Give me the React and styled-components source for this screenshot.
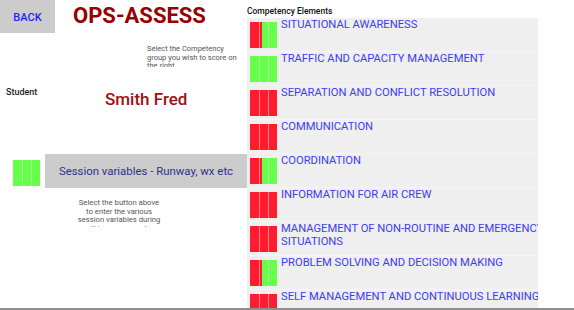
import React from "react";
import styled, { createGlobalStyle } from "styled-components";

const competencies = [
  { name: "SITUATIONAL AWARENESS", fills: [1, 0.35, 0] },
  { name: "TRAFFIC AND CAPACITY MANAGEMENT", fills: [0, 0, 0] },
  { name: "SEPARATION AND CONFLICT RESOLUTION", fills: [1, 1, 1] },
  { name: "COMMUNICATION", fills: [1, 1, 1] },
  { name: "COORDINATION", fills: [1, 0.35, 0] },
  { name: "INFORMATION FOR AIR CREW", fills: [1, 1, 1] },
  { name: "MANAGEMENT OF NON-ROUTINE AND EMERGENCY SITUATIONS", fills: [1, 1, 1] },
  { name: "PROBLEM SOLVING AND DECISION MAKING", fills: [1, 0.35, 0] },
  { name: "SELF MANAGEMENT AND CONTINUOUS LEARNING", fills: [1, 1, 1] },
];

const Bars = ({ fills }) => (
  <BarGroup>
    {fills.map((f, i) => (
      <Segment key={i} $fill={f} $first={i === 0} />
    ))}
  </BarGroup>
);

const App = () => {
  return (
    <>
      <GlobalStyle />
      <Page>
        <Main>
          <LeftColumn>
            <Header>
              <BackButton>BACK</BackButton>
              <Title>OPS-ASSESS</Title>
            </Header>
            <Hint>Select the Competency group you wish to score on the right</Hint>
            <StudentRow>
              <StudentLabel>Student</StudentLabel>
              <StudentName>Smith Fred</StudentName>
            </StudentRow>
            <SessionRow>
              <Bars fills={[0, 0, 0]} />
              <SessionButton>Session variables - Runway, wx etc</SessionButton>
            </SessionRow>
            <SessionNote>
              Select the button above
              <br />
              to enter the various
              <br />
              session variables during
              <br />
              this assessment
            </SessionNote>
          </LeftColumn>
          <RightColumn>
            <ListLabel>Competency Elements</ListLabel>
            <List>
              {competencies.map((c) => (
                <Row key={c.name}>
                  <Bars fills={c.fills} />
                  <RowText>{c.name}</RowText>
                </Row>
              ))}
            </List>
          </RightColumn>
        </Main>
        <BottomRule />
      </Page>
    </>
  );
};

export default App;

const GlobalStyle = createGlobalStyle`
  html, body {
    margin: 0;
    padding: 0;
    background: #ffffff;
  }
  body {
    width: 574px;
    height: 310px;
    overflow: hidden;
    font-family: Roboto, "Liberation Sans", sans-serif;
  }
`;

const Page = styled.div`
  width: 574px;
  height: 310px;
  display: flex;
  flex-direction: column;
`;

const Main = styled.div`
  display: flex;
  height: 308px;
  overflow: hidden;
`;

const LeftColumn = styled.div`
  width: 247px;
  flex: none;
  display: flex;
  flex-direction: column;
`;

const Header = styled.div`
  display: flex;
  height: 33px;
`;

const BackButton = styled.div`
  width: 55px;
  height: 33px;
  background: #cccccc;
  color: #2424f0;
  font-size: 11px;
  font-weight: 500;
  display: flex;
  align-items: center;
  justify-content: center;
  padding-top: 1px;
  box-sizing: border-box;
`;

const Title = styled.div`
  margin-left: 18px;
  padding-top: 4px;
  font-size: 22px;
  line-height: 24px;
  font-weight: 700;
  color: #990000;
`;

const Hint = styled.div`
  margin: 12px 0 0 147px;
  width: 92px;
  height: 22px;
  overflow: hidden;
  font-size: 7.5px;
  line-height: 8.5px;
  color: #555555;
`;

const StudentRow = styled.div`
  display: flex;
  align-items: flex-start;
  margin-top: 20px;
  height: 20px;
`;

const StudentLabel = styled.div`
  width: 99px;
  padding-left: 6px;
  font-size: 9px;
  line-height: 11px;
  font-weight: 500;
  color: #222222;
`;

const StudentName = styled.div`
  margin-top: 2px;
  font-size: 17px;
  line-height: 20px;
  font-weight: 500;
  color: #a01010;
`;

const SessionRow = styled.div`
  display: flex;
  align-items: flex-start;
  margin-top: 50px;
  padding-left: 13px;
  gap: 5px;
`;

const SessionButton = styled.div`
  width: 202px;
  height: 34px;
  margin-top: -3px;
  background: #cccccc;
  color: #30308c;
  font-size: 11.4px;
  display: flex;
  align-items: center;
  justify-content: center;
`;

const SessionNote = styled.div`
  margin: 11px 0 0 59px;
  width: 120px;
  height: 28px;
  overflow: hidden;
  text-align: center;
  font-size: 7.7px;
  line-height: 8.7px;
  color: #555555;
`;

const BarGroup = styled.div`
  display: flex;
  flex: none;
  margin-top: 3px;
  height: 26px;
`;

const Segment = styled.div`
  width: 9px;
  height: 26px;
  background: ${({ $fill }) =>
    `linear-gradient(to right, #ff1c2e ${$fill * 100}%, #66ff4a ${$fill * 100}%)`};
  box-shadow: ${({ $first }) =>
    $first ? "none" : "inset 1px 0 0 rgba(255, 255, 255, 0.45)"};
`;

const RightColumn = styled.div`
  width: 291px;
  flex: none;
  display: flex;
  flex-direction: column;
`;

const ListLabel = styled.div`
  height: 18px;
  padding-top: 6px;
  box-sizing: border-box;
  font-size: 8.5px;
  line-height: 10px;
  font-weight: 500;
  color: #111111;
`;

const List = styled.div`
  flex: 1;
  background: #efefef;
  overflow: hidden;
`;

const Row = styled.div`
  display: flex;
  align-items: flex-start;
  gap: 4px;
  height: 34px;
  padding: 1px 0 0 3px;
  box-sizing: border-box;
  border-bottom: 1px solid #f6f6f6;
`;

const RowText = styled.div`
  flex: none;
  width: 275px;
  font-size: 11.2px;
  line-height: 12.7px;
  color: #3c3cf5;
`;

const BottomRule = styled.div`
  height: 2px;
  background: #8f8f8f;
`;
